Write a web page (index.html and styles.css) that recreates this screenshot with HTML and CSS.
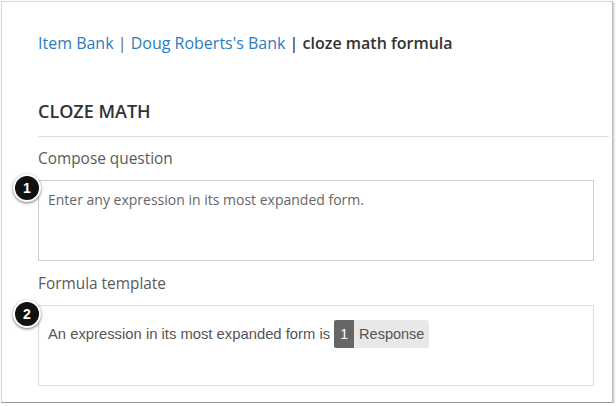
FILE: index.html
```html
<!DOCTYPE html>
<html>
<head>
<meta charset="utf-8">
<link rel="stylesheet" href="styles.css">
</head>
<body>
<div class="frame">
  <div class="crumbs">
    <a class="link">Item Bank</a> <span class="sep">|</span> <a class="link">Doug Roberts's Bank</a> <span class="sep sep2">|</span> <span class="current">cloze math formula</span>
  </div>
  <h1 class="title">CLOZE MATH</h1>
  <div class="rule"></div>
  <div class="label">Compose question</div>
  <div class="box box-compose">
    <span class="badge">1</span>
    Enter any expression in its most expanded form.
  </div>
  <div class="label label2">Formula template</div>
  <div class="box box-template">
    <span class="badge">2</span>
    <div class="template-line">
      <span>An expression in its most expanded form is</span>
      <span class="pill"><span class="pill-num">1</span><span class="pill-text">Response</span></span>
    </div>
  </div>
</div>
</body>
</html>
```
FILE: styles.css
```css
html, body {
  margin: 0;
  padding: 0;
  background: #fff;
}
.frame {
  box-sizing: border-box;
  margin: 1px 0 0 1px;
  width: 612px;
  height: 402px;
  border: 1px solid #d6d6d6;
  border-bottom-color: #9a9a9a;
  border-right-color: #bdbdbd;
  box-shadow: 1px 1px 2px rgba(0,0,0,0.25);
  padding: 31px 3px 0 36px;
  font-family: "Open Sans", sans-serif;
  color: #555;
}
.crumbs {
  font-size: 16px;
  line-height: 20px;
  color: #333;
  white-space: nowrap;
}
.link {
  color: #2d7bbd;
}
.sep {
  color: #6e6257;
}
.sep2 {
  color: #4a4541;
  font-weight: 600;
}
.current {
  font-weight: 600;
  color: #333;
}
.title {
  margin: 46px 0 0 0;
  font-size: 18px;
  line-height: 24px;
  font-weight: 600;
  color: #333;
}
.rule {
  margin-top: 13px;
  height: 1px;
  background: #dedede;
}
.label {
  margin-top: 12px;
  font-size: 15.4px;
  line-height: 20px;
  color: #5a5a5a;
}
.label2 {
  margin-top: 13px;
}
.box {
  position: relative;
  box-sizing: border-box;
  margin-top: 11px;
  width: 556px;
  height: 81px;
  border: 1px solid #cfcfcf;
  padding: 9px 0 0 9px;
  font-size: 14px;
  line-height: 20px;
  color: #666;
}
.box-template {
  margin-top: 11px;
  border-color: #dcdcdc;
  padding-top: 14px;
  font-family: "Liberation Sans", Arial, sans-serif;
  font-size: 14.8px;
  color: #555;
}
.template-line {
  display: flex;
  align-items: center;
  gap: 4px;
  height: 28px;
}
.pill {
  display: flex;
  height: 28px;
  align-items: stretch;
}
.pill-num {
  width: 20px;
  display: flex;
  align-items: center;
  justify-content: center;
  background: #666;
  color: #fff;
  border-radius: 2px 0 0 2px;
  font-size: 14px;
}
.pill-text {
  display: flex;
  align-items: center;
  padding: 0 5px 0 5px;
  background: #e8e8e8;
  color: #555;
  border-radius: 0 3px 3px 0;
  font-size: 14.5px;
}
.badge {
  position: absolute;
  left: -26px;
  top: -7px;
  box-sizing: border-box;
  width: 28px;
  height: 28px;
  border-radius: 50%;
  background: #111;
  border: 2px solid #fff;
  box-shadow: 0 1px 3px rgba(0,0,0,0.55);
  color: #fff;
  font-family: "Liberation Sans", Arial, sans-serif;
  font-weight: bold;
  font-size: 14px;
  line-height: 24px;
  text-align: center;
}
.box-template .badge {
  top: -6px;
}
```
